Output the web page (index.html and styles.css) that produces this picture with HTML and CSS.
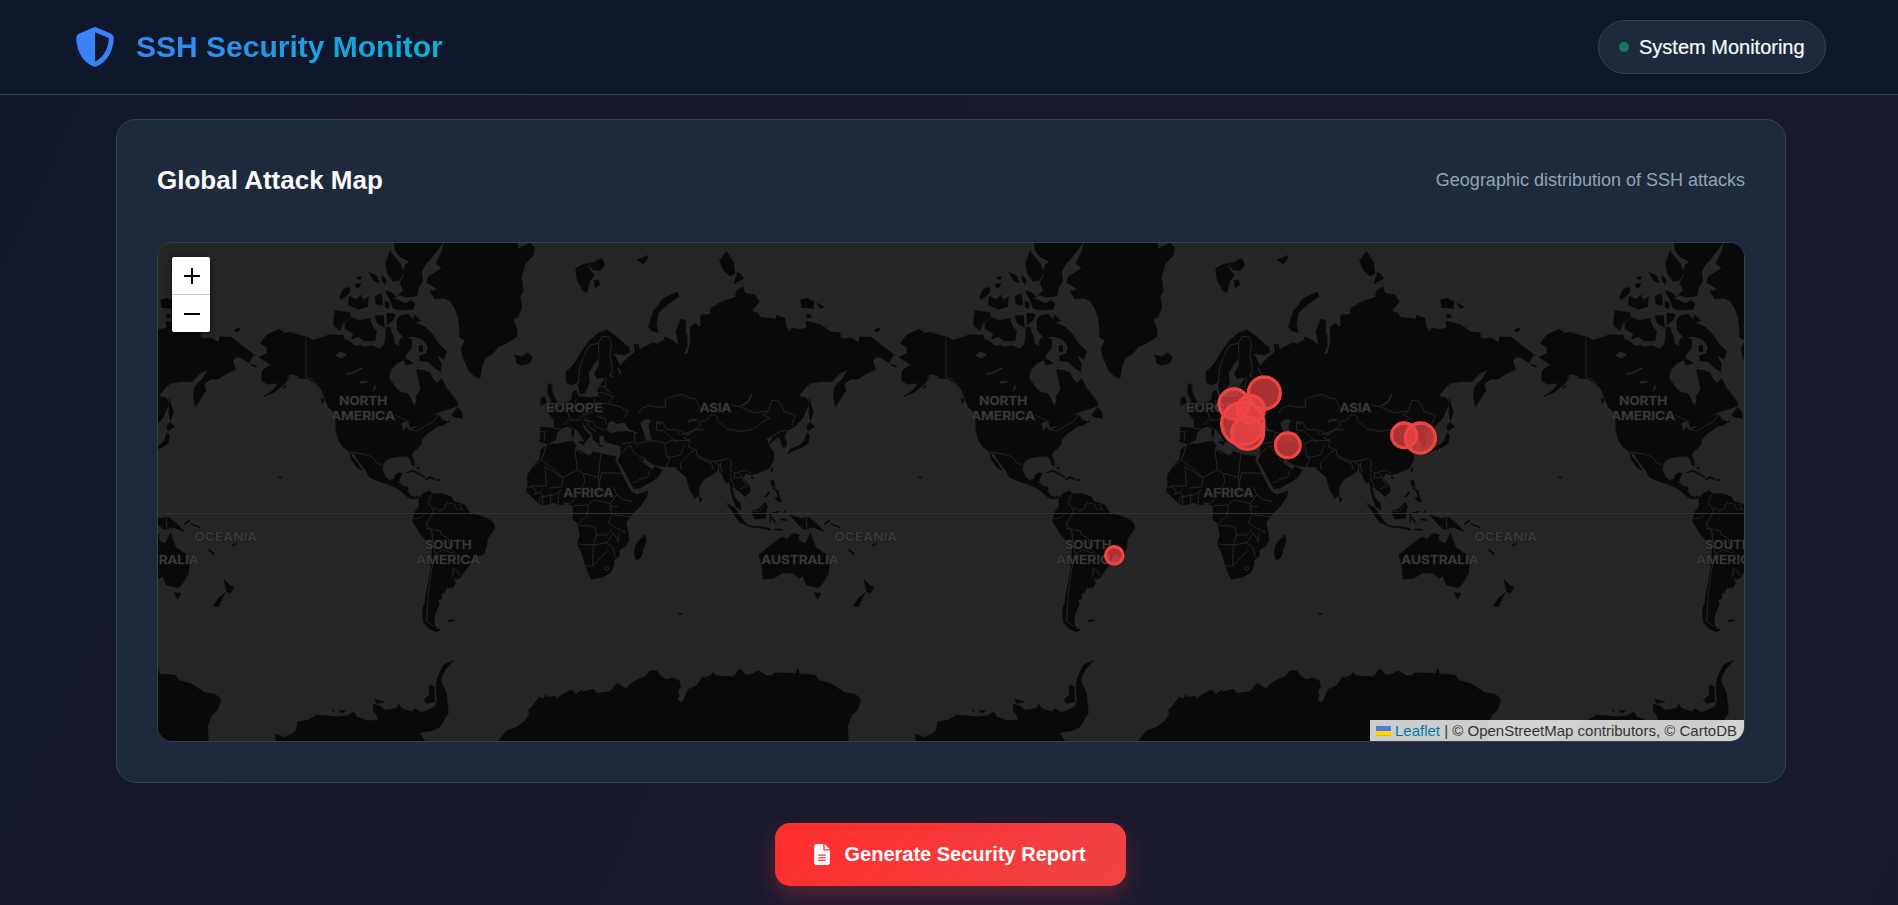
FILE: index.html
```html
<!DOCTYPE html>
<html lang="en">
<head>
<meta charset="utf-8">
<title>SSH Security Monitor</title>
<link rel="stylesheet" href="styles.css">
</head>
<body>
<header class="header">
  <div class="brand">
    <svg class="brand-icon" viewBox="0 0 512 512"><path d="M256 0c4.6 0 9.2 1 13.4 2.9L457.7 82.8c22 9.3 38.4 31 38.3 57.2c-.5 99.2-41.3 280.7-213.6 363.2c-16.7 8-36.1 8-52.8 0C57.3 420.7 16.5 239.2 16 140c-.1-26.2 16.3-47.9 38.3-57.2L242.7 2.9C246.8 1 251.4 0 256 0zm0 66.8V444.8C394 378 431.1 230.1 432 141.4L256 66.8z"/></svg>
    <h1 class="brand-name">SSH Security Monitor</h1>
  </div>
  <div class="status"><span class="status-dot"></span><span class="status-text">System Monitoring</span></div>
</header>
<main class="main">
  <section class="card">
    <div class="card-head">
      <h2 class="card-title">Global Attack Map</h2>
      <span class="card-sub">Geographic distribution of SSH attacks</span>
    </div>
    <div class="map">
      <svg class="map-canvas" viewBox="158 243 1586 498">
        <defs>
          <g id="world">
            <g transform="translate(300 240) scale(.33333)">
              <g class="land">
                <!-- North America -->
                <path d="M-5,292 L20,290 40,302 60,295 80,288 92,283 98,292 112,288 122,295 140,300 155,308 165,318 185,315 190,322 215,316 238,326 250,318 256,300 258,262 270,262 280,290 283,312 296,318 300,296 316,290 336,300 334,325 318,345 312,360 290,370 272,390 267,415 285,440 300,455 325,462 333,478 342,497 350,485 348,468 362,450 358,425 352,405 350,388 372,392 390,398 398,418 412,430 425,415 440,445 455,465 472,485 473,497 455,505 430,512 410,518 395,530 415,522 425,538 440,545 450,543 430,555 410,560 395,572 380,582 365,600 362,615 345,632 335,642 342,665 344,678 336,675 330,655 318,648 290,650 262,658 250,670 248,690 255,710 268,720 282,718 285,705 298,698 306,700 300,715 296,728 310,738 325,742 323,755 332,768 345,772 352,767 357,773 340,778 325,772 315,765 300,750 285,742 270,735 240,725 208,712 200,695 180,670 160,640 148,635 158,652 175,672 186,692 170,682 155,660 147,635 130,622 115,600 108,575 107,545 110,530 100,515 85,500 75,478 62,450 50,435 38,425 20,415 -5,415Z"/>
                <!-- Canadian Arctic -->
                <path d="M282,5H432L405,40 390,60 375,75 365,95 368,120 355,145 350,168 320,172 295,165 310,150 300,130 310,110 315,75 330,65 300,50 285,30ZM270,33 283,50 300,70 312,95 300,120 280,124 262,100 257,70ZM270,180 290,178 315,190 335,182 345,192 340,208 300,210 280,205ZM255,152 275,158 290,170 272,182ZM105,212 150,218 152,232 130,248 120,272 100,255ZM135,250 155,232 178,242 210,235 215,255 230,275 225,302 195,303 175,290 155,298 160,280 135,268ZM290,240 300,228 325,223 340,240 342,225 362,242 345,248 375,260 395,280 415,310 440,335 432,357 410,345 423,370 422,395 400,380 385,365 360,362 358,348 380,340 385,322 370,300 345,290 310,292 292,270ZM148,168 170,178 182,165 190,180 205,170 203,200 175,208 145,195ZM118,172 130,148 150,142 148,158 125,180ZM225,168 245,162 248,195 228,192ZM207,97 230,108 238,130 222,122ZM246,105 258,120 256,132 246,124ZM225,228 250,226 254,262 232,250ZM260,220 285,222 280,240 262,255ZM255,182 268,190 266,206 256,202ZM310,350 340,370 318,376ZM168,112 184,110 180,120ZM166,132 182,130 178,142 168,142ZM356,318 368,316 368,335 358,335Z"/>
                <!-- Greenland, Iceland, Svalbard -->
                <path d="M434,5H645L655,15 650,30 665,20 690,10 705,22 700,45 675,72 665,110 670,155 660,170 665,200 655,230 640,238 652,270 650,290 620,310 595,320 580,340 555,355 545,385 540,415 525,410 508,395 490,355 483,325 496,300 478,292 480,275 475,235 465,205 450,182 430,174 405,177 390,155 412,148 380,127 385,110 425,85 408,70 425,35ZM642,345 665,350 685,338 697,352 690,368 665,376 648,368 650,358ZM827,85 845,75 862,70 870,90 883,105 868,125 860,160 848,150 830,115ZM865,72 885,65 905,55 915,75 900,92 880,90ZM882,122 895,120 900,135 885,143ZM1012,60 1030,52 1045,46 1040,62 1028,72Z"/>
                <path d="M455,525 473,502 485,515 488,535 465,532Z"/>
                <path class="isle" d="M322,697 340,692 358,702 372,711M378,718 392,712 404,718M412,720H419M72,475 66,488M352,683 356,687M446,1143 462,1140"/>
                <!-- South America -->
                <path d="M357,773 365,765 372,758 388,753 400,762 420,760 440,765 455,772 462,785 480,790 495,795 505,812 515,822 535,825 560,835 578,845 585,860 575,880 563,895 560,920 552,942 535,948 515,960 508,975 495,992 485,1008 475,1018 460,1015 467,1030 460,1042 438,1045 435,1058 425,1060 425,1075 415,1080 418,1095 412,1105 405,1125 403,1140 403,1155 410,1165 422,1170 408,1176 390,1168 372,1150 368,1125 368,1105 375,1085 378,1060 385,1030 392,990 396,950 396,910 375,898 360,880 345,855 338,845 345,815 357,800Z"/>
                <!-- Africa -->
                <path d="M740,615 755,612 775,612 800,605 820,604 828,615 825,628 845,635 868,648 880,635 905,642 935,648 948,648 945,660 960,690 972,715 982,735 995,755 1010,764 1045,752 1040,770 1020,800 990,830 978,848 985,880 987,900 975,920 958,930 958,948 942,960 943,975 930,1000 905,1012 875,1018 865,1000 855,975 848,945 833,912 840,885 833,850 818,838 820,820 818,798 800,790 785,795 760,788 735,795 715,790 695,770 680,755 683,735 683,705 698,680 720,655 722,630ZM1035,885 1038,900 1030,925 1020,955 1008,960 1002,940 1008,912 1022,905Z"/>
                <!-- Europe and the Near East -->
                <path d="M798,395 820,375 845,335 865,305 895,280 920,270 937,280 960,300 985,320 990,336 972,345 940,340 952,360 960,378 985,352 1005,335 1002,312 1016,315 1018,330 1030,322V738L1003,748 990,725 975,695 954,662 962,645 962,618 940,612 915,605 912,588 897,585 898,612 880,600 876,580 862,568 848,545 850,565 872,588 855,605 835,575 820,563 800,560 785,565 770,580 768,598 745,612 720,605 722,560 762,565 762,540 745,518 790,495 815,478 818,455 828,450 835,470 870,472 900,470 892,452 905,430 918,412 890,415 883,400 898,375 897,350 880,375 865,400 868,430 855,458 840,462 833,425 815,435 800,428Z"/>
                <path d="M745,430 757,435 755,450 765,475 772,490 745,500 755,480 742,460ZM722,475 735,470 738,488 722,496ZM816,565 822,570 820,590 815,588ZM835,605 855,605 850,615ZM895,615 912,618 900,620Z"/>
              </g>
              <g class="water">
                <path d="M920,570 925,550 935,543 950,552 972,548 992,572 960,573 935,580ZM303,548 325,543 332,572 318,560 310,575ZM105,347 120,335 142,342 125,356Z"/>
                <path class="lake" d="M142,402 165,396 186,385M180,428 200,425M225,438 222,450M328,568 345,560M955,385 963,402M930,405 936,412"/>
              </g>
              <path class="border" d="M18,292V412L38,418 50,432 62,450 75,478M148,635 190,642 215,650 230,668 245,675M285,525 305,535 320,540 328,570 355,572 372,560 400,545 420,520 440,512M345,772 350,780M395,765 385,790 400,810 395,825 378,855 395,870 398,910M340,835 360,835 375,820M400,800 415,812 430,808 440,790 458,790M462,790 470,808 490,808M480,792 485,806M378,865 420,872 425,885 445,895 450,920 465,940M396,880 405,940 395,990 385,1060 382,1110 380,1145 400,1158M405,940 430,930 460,940M460,985 458,1010M460,985 485,1008M740,615 725,660 790,712 832,690 825,628M725,660 700,680M735,680 740,738H690M735,680 790,715M832,690 850,700 895,712 902,642M905,698 970,700M850,700 855,725 840,755 850,775M895,712 900,740 890,765M790,715 785,740 745,745M905,698 895,740M680,742 700,740 710,760M700,765 720,755 730,770M728,765V792M752,760V790M775,755V790M715,785 725,770 760,765 785,750M790,790 810,790 840,760M818,798 865,795 880,780 930,790 950,765 975,780 1000,785M940,740 950,765M865,795 860,830 835,850M930,790 935,825 925,850 980,880M835,855 885,860 890,885H920L935,870M835,912 880,915 890,885M930,800 955,800M880,915 920,908 940,880 955,905M880,915 878,978M850,978H878L905,950 925,930M920,908 940,925 945,950M915,978 925,980 925,990 915,988ZM940,825 990,830M955,880V910M835,430 838,390 850,350 870,315 895,310 897,350M895,310 905,290 925,290 935,310 930,345 938,390 930,410M722,575 735,575 732,605M762,565 785,567M790,500 805,520 810,540 835,540 850,525 880,520M825,480 830,510 850,520 875,515 885,475M885,455 915,460 940,470 925,490 890,490M895,440 915,440M920,410 915,445 935,460M890,490 910,505 890,530 915,535 920,555M920,490 960,500 985,515 970,535M850,540 880,545 885,560 915,570M865,560 890,575M850,530 865,545 865,560M962,575 985,568 1005,578 1030,580M1005,578 1003,605 965,612M970,570 1000,575M962,640 990,615 1003,640 1030,655M1005,605 1025,635M1000,728 1030,718M1030,490 1018,520 1030,535M805,540 790,555M850,645 825,628"/>
            </g>
            <g transform="translate(640 240) scale(.33333)">
              <g class="land">
                <!-- Asia -->
                <path d="M-5,337 15,320 40,308 50,312 72,300 75,290 100,302 117,318 108,275 122,238 137,240 137,275 148,300 150,262 165,250 182,262 182,225 212,222 212,205 240,188 260,180 285,172 290,152 308,140 315,160 345,165 358,185 335,213 355,220 360,232 390,235 408,238 410,226 435,235 438,258 450,275 455,264 480,268 500,263 497,243 545,255 570,275 600,278 603,295 635,295 655,307 660,290 695,292 730,320 763,345 755,352 748,368 725,355 710,350 698,363 708,388 680,400 655,416 632,418 612,432 618,450 600,480 586,500 580,465 585,440 608,415 625,388 600,400 575,425 545,425 510,430 475,468 500,475 506,495 490,530 465,560 442,572 432,590 440,605 438,620 428,622 422,600 415,590 400,603 383,615 400,590 380,596 385,615 400,635 402,658 388,685 365,695 335,705 315,700 310,715 328,735 332,755 315,770 300,755 285,745 275,735 282,770 300,790 303,810 288,800 275,765 270,730 255,725 245,700 235,690 215,705 190,720 178,740 177,765 165,775 150,750 138,710 120,695 105,680 75,680 45,675 25,665 0,632 -5,655 15,670 35,690 45,680 68,690 50,715 0,745H-5Z"/>
                <path d="M112,156 117,170 80,195 55,220 48,255 55,278 35,272 25,260 40,215 70,175ZM260,35 280,65 285,100 270,108 250,90 238,62ZM293,95 312,115 282,131ZM482,180 500,175 522,185 520,205 485,203ZM530,190 552,200 542,205ZM498,228 508,222 516,232 502,234ZM703,270 715,264 722,270 708,276Z"/>
                <path d="M443,642 450,628 480,615 495,600 500,578 508,585 505,610 485,622 460,632ZM500,560 510,546 524,560 505,573ZM508,473 514,500 520,515 512,542 507,520ZM177,768 186,780 180,787ZM260,790 285,805 318,852 300,848 280,820ZM333,815 355,808 375,787 382,798 376,835 345,838ZM450,825 480,835 505,832 530,850 552,875 520,862 490,868 470,848ZM357,945 380,925 400,910 425,890 440,897 460,880 478,885 475,900 495,912 512,878 520,905 530,925 555,940 568,975 565,1000 548,1030 535,1043 500,1035 488,1008 478,1015 460,1000 430,998 400,1015 370,1018 367,985ZM523,1058 542,1060 533,1078ZM672,1018 688,1035 702,1042 690,1060 680,1055ZM675,1058 665,1080 655,1100 640,1098 655,1075ZM392,720 402,722 404,742 394,738ZM405,775 418,768 425,785 415,786ZM-5,903 15,885 18,900 5,945 -5,958Z"/>
                <path class="isle" d="M315,853 335,860 365,862 390,868M400,745 415,755M412,757 417,768M398,684 393,696M335,712 340,715M388,822 415,815M392,825 390,845M395,832 405,846M405,868 425,870M423,838 440,840M434,812V820M555,852 568,842M575,852 598,862M628,930 640,941M698,916 708,911M378,770 386,758M838,712H843M117,1122H125M755,375 768,380M850,444 856,438M965,478 968,488"/>
                <!-- Alaska -->
                <path d="M782,310 800,285 837,268 855,280 870,276 917,292 940,303 960,295 990,285H1030V430L985,470 960,435 930,415 905,408 885,405 868,403 860,425 825,455 792,470 820,450 835,430 800,432 785,422 785,400 790,388 812,375 800,365 778,352 800,340 802,325Z"/>
              </g>
              <g class="water">
                <path d="M0,548 15,538 33,540 25,558 35,600 18,602 12,580ZM148,262 152,300 142,340 132,343 142,320 143,280Z"/>
                <path class="lake" d="M335,462 325,485 305,497M145,546 152,540 170,539M52,548 60,552"/>
              </g>
              <path class="border" d="M-5,520 5,505 25,497 60,502 78,500 75,478 95,470 125,463 150,475 165,475 180,505 230,515M275,495 300,500 325,512 345,518 385,512 395,482 412,480 425,495 432,515 468,525 455,552 462,560M385,515 370,525 390,535 360,550 340,568 305,574 265,568 235,545 230,530 215,522 200,540 178,545 180,558 150,580 120,585 110,570 80,568 68,548 50,545V570L70,572 100,600 115,608M150,580 130,595 150,600M35,600 75,610 100,600 130,602 150,600 145,620 170,630 170,645 215,665 240,662 265,655 275,665 270,690 285,700 315,690 335,702M75,610 80,650 95,652 120,645 135,615M78,680 90,660 80,650M125,690 120,670 150,640 165,630M170,650 215,672 220,690M225,668 238,675 232,698M245,695 240,665M270,700 275,725 285,740M285,700 282,715 305,712 320,742 300,745M295,700 310,715 328,740M380,598 420,575 440,570M-5,610 10,606 35,603M-5,655 20,675M-5,718 22,712 30,690M500,832V866M335,812 355,815 372,800M918,292V412L945,430 960,432 978,465M115,570 135,580 165,570 190,568"/>
            </g>
            <!-- Antarctica -->
            <g transform="translate(450 640) scale(.33333)" class="land">
              <path d="M140,310 170,272 200,262 225,242 238,225 235,210 250,195 268,170 280,178 286,165 295,172 315,168 320,175 340,162 365,150 378,162 395,150 400,155 430,148 442,160 480,155 503,128 510,135 528,146 545,128 570,115 585,110 600,92 620,92 632,108 650,120 665,113 688,122 692,140 683,155 688,165 683,178 692,188 700,182 715,148 738,138 755,113 780,108 790,97 797,107 850,110 870,87 888,105 905,103 925,92 950,107 965,107 975,98 1038,100 1043,85 1048,102 1095,105 1105,120 1145,132 1185,158 1215,162 1233,178 1222,210 1205,225 1192,260 1196,310Z"/>
            </g>
            <g transform="translate(150 500) scale(.33333)" class="land">
              <path d="M377,728V702L400,712 425,702 440,690 442,665 475,660 500,645 560,650 590,648 612,636 620,650 650,662 685,660 680,645 670,632V613L690,618 705,630 740,625 745,612 755,625 785,635 795,626 815,637 840,628 855,618 862,600 858,570 862,535 880,495 912,480 885,510 872,540 890,580 895,640 870,680 845,692 808,698 828,728ZM675,598 705,606 680,610ZM820,600 838,585 838,555 852,560 855,605 830,610ZM545,627 555,634 548,632ZM568,630 586,632 575,640Z"/>
            </g>
          </g>
          <g id="names" class="names">
            <g transform="translate(300 240) scale(.33333)">
              <text x="117" y="494" textLength="145" lengthAdjust="spacingAndGlyphs">NORTH</text>
              <text x="93" y="540" textLength="192" lengthAdjust="spacingAndGlyphs">AMERICA</text>
              <text x="738" y="516" textLength="170" lengthAdjust="spacingAndGlyphs">EUROPE</text>
              <text x="790" y="772" textLength="150" lengthAdjust="spacingAndGlyphs">AFRICA</text>
              <text x="374" y="926" textLength="141" lengthAdjust="spacingAndGlyphs">SOUTH</text>
              <text x="348" y="972" textLength="193" lengthAdjust="spacingAndGlyphs">AMERICA</text>
              <text x="1199" y="515" textLength="95" lengthAdjust="spacingAndGlyphs">ASIA</text>
              <text x="1603" y="903" textLength="189" lengthAdjust="spacingAndGlyphs">OCEANIA</text>
              <text x="1384" y="973" textLength="232" lengthAdjust="spacingAndGlyphs">AUSTRALIA</text>
            </g>
          </g>
        </defs>
        <rect class="sea" x="158" y="243" width="1586" height="498"/>
        <use href="#world" x="-640"/><use href="#world"/><use href="#world" x="640"/><use href="#world" x="1280"/>
        <path class="equator" d="M158,513.5H1744"/>
        <use href="#names" x="-640"/><use href="#names"/><use href="#names" x="640"/><use href="#names" x="1280"/>
        <g class="attacks">
          <circle cx="1264.3" cy="393" r="16"/>
          <circle cx="1242.8" cy="423.6" r="21.2"/>
          <circle cx="1234" cy="404" r="15"/>
          <circle cx="1250.7" cy="409.3" r="13.7"/>
          <circle cx="1247.6" cy="433.3" r="16"/>
          <circle cx="1287.8" cy="445.3" r="12.4"/>
          <circle cx="1404.1" cy="435.4" r="12.4"/>
          <circle cx="1420.4" cy="438" r="15"/>
          <circle cx="1114.3" cy="555.4" r="8.7"/>
        </g>
      </svg>
      <div class="zoom">
        <a class="zoom-btn"><svg viewBox="0 0 38 37"><path d="M12,19H28M20,11V27"/></svg></a>
        <a class="zoom-btn"><svg viewBox="0 0 38 37"><path d="M12,19H28"/></svg></a>
      </div>
      <div class="attribution">
        <svg class="flag" viewBox="0 0 15 10"><path fill="#4c7be1" d="M0 0h15v5H0z"/><path fill="#ffd500" d="M0 5h15v5H0z"/><path fill="#e0bc00" d="M0 9h15v1H0z"/></svg>
        <span class="credits"><a class="leaflet">Leaflet</a> | © OpenStreetMap contributors, © CartoDB</span>
      </div>
    </div>
  </section>
  <button class="report">
    <svg class="report-icon" viewBox="0 0 384 512"><path d="M64 0C28.7 0 0 28.7 0 64V448c0 35.3 28.7 64 64 64H320c35.3 0 64-28.7 64-64V160H256c-17.7 0-32-14.3-32-32V0H64zM256 0V128H384L256 0zM112 256H272c8.800 0 16 7.200 16 16s-7.200 16-16 16H112c-8.800 0-16-7.200-16-16s7.200-16 16-16zm0 64H272c8.800 0 16 7.200 16 16s-7.200 16-16 16H112c-8.800 0-16-7.200-16-16s7.200-16 16-16zm0 64H272c8.800 0 16 7.200 16 16s-7.200 16-16 16H112c-8.800 0-16-7.200-16-16s7.200-16 16-16z"/></svg>
    <span>Generate Security Report</span>
  </button>
</main>
</body>
</html>
```
FILE: styles.css
```css
* { box-sizing: border-box; }
html, body { margin: 0; height: 905px; overflow: hidden; }
body {
  font-family: "Liberation Sans", Arial, sans-serif;
  color: #f8fafc;
  background: linear-gradient(115deg, #12182b 0%, #19192d 40%, #1a1a2e 85%, #17192d 100%);
}
.header {
  display: flex; align-items: center; justify-content: space-between;
  height: 95px; padding: 0 72px 0 75px;
  background: #0f172a; border-bottom: 1px solid #334155;
}
.brand { display: flex; align-items: center; gap: 21px; }
.brand-icon { width: 40px; height: 40px; fill: #3b82f6; }
.brand-name {
  margin: 0; font-size: 30px; line-height: 40px; font-weight: 700;
  background: linear-gradient(135deg, #3b82f6, #06b6d4);
  -webkit-background-clip: text; background-clip: text; color: transparent;
}
.status {
  display: flex; align-items: center; gap: 10px;
  width: 228px; height: 54px; padding-left: 20px;
  background: #1e293b; border: 1px solid #334155; border-radius: 27px;
}
.status-dot { width: 10px; height: 10px; border-radius: 50%; background: #177a60; }
.status-text { font-size: 20px; white-space: nowrap; -webkit-text-stroke: .2px #f8fafc; }
.main { display: flex; flex-direction: column; align-items: center; padding: 24px 112px 0 116px; }
.card {
  width: 100%; height: 664px; padding: 40px;
  background: #1e293b; border: 1px solid #334155; border-radius: 20px;
}
.card-head { display: flex; align-items: center; justify-content: space-between; height: 40px; margin-bottom: 42px; }
.card-title { margin: 0; font-size: 26px; font-weight: 700; }
.card-sub { font-size: 18px; color: #94a3b8; }
.map {
  position: relative; height: 500px; overflow: hidden;
  border: 1px solid #334155; border-radius: 15px; background: #262626;
}
.map-canvas { display: block; width: 100%; height: 100%; }
.sea { fill: #262626; }
.land { fill: #090909; stroke: #090909; stroke-width: 1.5; stroke-linejoin: round; }
.isle { fill: none; stroke: #090909; stroke-width: 5; stroke-linecap: round; }
.water { fill: #262626; }
.lake { fill: none; stroke: #262626; stroke-width: 5; stroke-linecap: round; }
.border { fill: none; stroke: #252525; stroke-width: 3; stroke-linejoin: round; }
.equator { stroke: #323232; stroke-width: 1; }
.names {
  font-family: Inter, sans-serif; font-size: 37px; font-weight: 600;
  fill: #3b3b3b; stroke: #181818; stroke-width: 5; paint-order: stroke; stroke-opacity: .6;
}
.attacks { fill: #ef4444; fill-opacity: .7; stroke: #ef4444; stroke-width: 3.3; }
.zoom {
  position: absolute; left: 14px; top: 14px; width: 38px; height: 75px;
  display: flex; flex-direction: column; overflow: hidden;
  background: #fff; border-radius: 2px; box-shadow: 0 1px 6px rgba(0, 0, 0, .65);
}
.zoom-btn { display: block; height: 37px; }
.zoom-btn:first-child { height: 38px; border-bottom: 1px solid #ccc; }
.zoom-btn svg { display: block; width: 38px; height: 37px; fill: none; stroke: #000; stroke-width: 2; }
.attribution {
  position: absolute; right: 0; bottom: 0; width: 374px; height: 21px; padding-left: 6px;
  display: flex; align-items: center; gap: 4px;
  background: rgba(255, 255, 255, .8); color: #333; font-size: 15px; white-space: nowrap;
}
.flag { width: 15px; height: 10px; }
.leaflet { color: #0078a8; }
.report {
  display: flex; align-items: center; gap: 15px;
  width: 351px; height: 63px; margin: 40px 2px 0 0; padding: 0 0 0 39px;
  border: 0; border-radius: 15px; color: #fff;
  font: 700 20px "Liberation Sans", Arial, sans-serif; white-space: nowrap;
  background: linear-gradient(135deg, #ff2d2d, #ef4444);
  box-shadow: 0 10px 25px rgba(239, 68, 68, .3);
}
.report-icon { width: 16px; height: 21px; fill: #fff; }
```
